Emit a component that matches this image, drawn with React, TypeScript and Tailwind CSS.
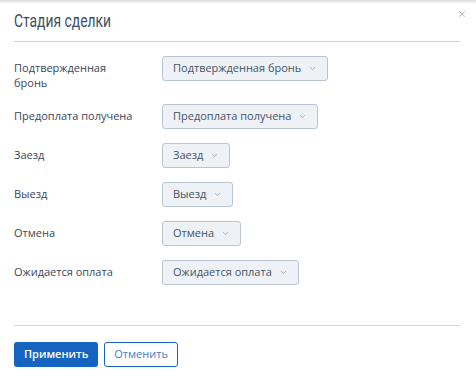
import { ChevronDown, X } from "lucide-react";

const stages = [
  { label: "Подтвержденная бронь", value: "Подтвержденная бронь" },
  { label: "Предоплата получена", value: "Предоплата получена" },
  { label: "Заезд", value: "Заезд" },
  { label: "Выезд", value: "Выезд" },
  { label: "Отмена", value: "Отмена" },
  { label: "Ожидается оплата", value: "Ожидается оплата" },
];

function StageSelect({ value }: { value: string }) {
  return (
    <button className="h-[25px] flex items-center gap-[7px] pl-[10px] pr-[10px] bg-[#eef2f6] border border-[#b9c5d3] rounded-[3px] text-[11px] text-[#44536a]">
      {value}
      <ChevronDown className="w-[9px] h-[9px] text-[#8a97a8]" strokeWidth={2} />
    </button>
  );
}

export default function App() {
  return (
    <div className="w-[476px] h-[383px] bg-white flex flex-col font-['Open_Sans',sans-serif] relative">
      <div className="h-[4px] bg-gradient-to-b from-[#dcdcdc] to-white" />

      {/* Header */}
      <div className="mx-[14px] mr-[16px] h-[38px] flex items-center border-b border-[#c8d2de]">
        <h2 className="font-['Roboto',sans-serif] text-[18px] text-[#3e4d63] pb-[4px] scale-x-[0.77] origin-left">
          Стадия сделки
        </h2>
      </div>
      <button className="absolute top-[9px] right-[9px] text-[#8090a8]">
        <X className="w-[10px] h-[10px]" strokeWidth={1.6} />
      </button>

      {/* Rows */}
      <div className="flex flex-col gap-[14px] pt-[14px] px-[14px]">
        {stages.map((s, i) => (
          <div key={i} className="flex items-start">
            <div className="w-[148px] pt-[4px] leading-[15px] text-[11px] text-[#3b4758] pr-[20px]">
              {s.label}
            </div>
            <StageSelect value={s.value} />
          </div>
        ))}
      </div>

      <div className="flex-1" />

      {/* Footer */}
      <div className="mx-[14px] mr-[16px] border-t border-[#d3d9e1] pt-[16px] pb-[16px] flex gap-[6px]">
        <button className="h-[25px] px-[10px] bg-[#1565c0] rounded-[3px] text-white text-[11px] font-semibold">
          Применить
        </button>
        <button className="h-[25px] px-[9px] border border-[#1565c0] rounded-[3px] text-[#3f7bc6] text-[11px]">
          Отменить
        </button>
      </div>
    </div>
  );
}
